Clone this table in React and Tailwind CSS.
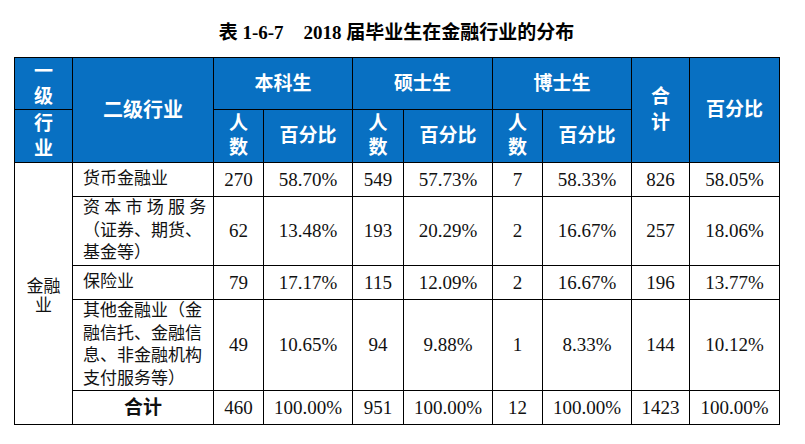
import React from 'react';

const serif = '[font-family:"Liberation_Serif","Noto_Sans_CJK_SC",serif]';
const sans = '[font-family:"Liberation_Sans","Noto_Sans_CJK_SC",sans-serif]';

const rows = [
  { name: ['货币金融业'], h: 'h-[34px]', v: ['270', '58.70%', '549', '57.73%', '7', '58.33%', '826', '58.05%'] },
  { name: ['资本市场服务', '（证券、期货、', '基金等）'], justifyFirst: true, h: 'h-[69px]', v: ['62', '13.48%', '193', '20.29%', '2', '16.67%', '257', '18.06%'] },
  { name: ['保险业'], h: 'h-[34px]', v: ['79', '17.17%', '115', '12.09%', '2', '16.67%', '196', '13.77%'] },
  { name: ['其他金融业（金', '融信托、金融信', '息、非金融机构', '支付服务等）'], h: 'h-[91px]', v: ['49', '10.65%', '94', '9.88%', '1', '8.33%', '144', '10.12%'] },
];

const total = ['460', '100.00%', '951', '100.00%', '12', '100.00%', '1423', '100.00%'];

const th = 'border border-black bg-[#0870c2] text-white font-bold text-center align-middle p-0';
const td = 'border border-black text-center align-middle p-0 text-[#111]';

export default function App() {
  return (
    <div className="w-[805px] h-[444px] bg-white overflow-hidden">
      <div className="w-[765px] ml-[14px] pt-[21px]">
        <div className={`text-center text-[19px] font-bold text-black leading-[24px] ${serif}`}>
          <span className={sans}>表</span> 1-6-7<span className="ml-[20px]">2018</span>{' '}
          <span className={sans}>届毕业生在金融行业的分布</span>
        </div>
        <table className={`mt-[12px] w-[765px] table-fixed border-collapse ${sans}`}>
          <colgroup>
            <col className="w-[58px]" />
            <col className="w-[141px]" />
            <col className="w-[50px]" />
            <col className="w-[89px]" />
            <col className="w-[51px]" />
            <col className="w-[89px]" />
            <col className="w-[50px]" />
            <col className="w-[89px]" />
            <col className="w-[58px]" />
            <col className="w-[90px]" />
          </colgroup>
          <thead>
            <tr className="h-[52px]">
              <th className={`${th} text-[19px] leading-[25px]`}>一<br />级</th>
              <th rowSpan={2} className={`${th} text-[20px] leading-[24px]`}>二级行业</th>
              <th colSpan={2} className={`${th} text-[19px] leading-[24px]`}>本科生</th>
              <th colSpan={2} className={`${th} text-[19px] leading-[24px]`}>硕士生</th>
              <th colSpan={2} className={`${th} text-[19px] leading-[24px]`}>博士生</th>
              <th rowSpan={2} className={`${th} text-[19px] leading-[26px]`}>合<br />计</th>
              <th rowSpan={2} className={`${th} text-[19px] leading-[24px]`}>百分比</th>
            </tr>
            <tr className="h-[53px]">
              <th className={`${th} text-[19px] leading-[25px]`}>行<br />业</th>
              <th className={`${th} text-[19px] leading-[24px]`}>人<br />数</th>
              <th className={`${th} text-[19px] leading-[24px]`}>百分比</th>
              <th className={`${th} text-[19px] leading-[24px]`}>人<br />数</th>
              <th className={`${th} text-[19px] leading-[24px]`}>百分比</th>
              <th className={`${th} text-[19px] leading-[24px]`}>人<br />数</th>
              <th className={`${th} text-[19px] leading-[24px]`}>百分比</th>
            </tr>
          </thead>
          <tbody>
            {rows.map((r, i) => (
              <tr key={i} className={r.h}>
                {i === 0 && (
                  <td rowSpan={5} className={`${td} text-[17px] leading-[19px] pt-[4px] ${serif}`}>
                    金融<br />业
                  </td>
                )}
                <td className={`${td} text-left pl-[10px] pr-[8px] text-[17px] leading-[22.5px] ${serif}`}>
                  {r.name.map((line, j) => (
                    <div
                      key={j}
                      className={
                        r.justifyFirst && j === 0
                          ? 'w-[120px] text-justify [text-align-last:justify] whitespace-nowrap'
                          : 'whitespace-nowrap'
                      }
                    >
                      {r.justifyFirst && j === 0 ? line.split('').join(' ') : line}
                    </div>
                  ))}
                </td>
                {r.v.map((val, k) => (
                  <td key={k} className={`${td} text-[19px] leading-[24px] ${serif}`}>{val}</td>
                ))}
              </tr>
            ))}
            <tr className="h-[34px]">
              <td className={`${td} font-bold text-[19px] leading-[24px] ${sans}`}>合计</td>
              {total.map((val, k) => (
                <td key={k} className={`${td} text-[19px] leading-[24px] ${serif}`}>{val}</td>
              ))}
            </tr>
          </tbody>
        </table>
      </div>
    </div>
  );
}
